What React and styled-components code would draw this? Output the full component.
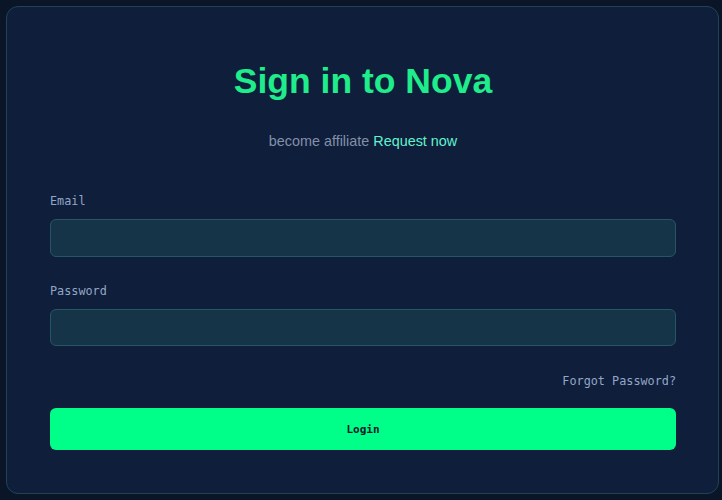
import React from "react";
import styled, { createGlobalStyle } from "styled-components";

const Global = createGlobalStyle`
  html, body { margin: 0; padding: 0; background: #0a1628; }
  body { font-family: "Liberation Sans", Arial, sans-serif; }
  * { box-sizing: border-box; }
`;

const Page = styled.div`
  padding: 6px 3px 6px 6px;
  height: 500px;
`;

const Card = styled.form`
  height: 488px;
  background: #0f1e3a;
  border: 1px solid #1e4454;
  border-radius: 12px;
  padding: 0 42px 43px 43px;
  display: flex;
  flex-direction: column;
`;

const Title = styled.h1`
  margin: 53px 0 0;
  font-family: "Liberation Sans", Arial, sans-serif;
  font-weight: 700;
  font-size: 35.5px;
  line-height: 43px;
  text-align: center;
  color: #1fec8b;
`;

const Subtitle = styled.p`
  margin: 29px 0 0;
  font-size: 14.4px;
  line-height: 18px;
  text-align: center;
  color: #8390aa;
`;

const Link = styled.a`
  color: #62f2cf;
  text-decoration: none;
  cursor: pointer;
`;

const Label = styled.label`
  display: block;
  margin-top: ${(p) => p.$top}px;
  font-family: "DejaVu Sans Mono", "Liberation Mono", monospace;
  font-size: 11.8px;
  line-height: 14px;
  color: #92a7c8;
`;

const Input = styled.input`
  display: block;
  width: 100%;
  height: 38px;
  margin-top: 11px;
  background: #163447;
  border: 1px solid #265565;
  border-radius: 6px;
  color: #d6e4f0;
  padding: 0 12px;
  outline: none;
`;

const ForgotRow = styled.div`
  margin-top: 28px;
  display: flex;
  justify-content: flex-end;
`;

const Forgot = styled.a`
  font-family: "DejaVu Sans Mono", "Liberation Mono", monospace;
  font-size: 11.8px;
  line-height: 14px;
  color: #92a7c8;
  cursor: pointer;
`;

const Button = styled.button`
  margin-top: 20px;
  width: 100%;
  height: 42px;
  border: none;
  border-radius: 6px;
  background: #00ff88;
  color: #0c1a2e;
  font-family: "DejaVu Sans Mono", "Liberation Mono", monospace;
  font-weight: 700;
  font-size: 11px;
  cursor: pointer;
`;

export default function App() {
  return (
    <>
      <Global />
      <Page>
        <Card onSubmit={(e) => e.preventDefault()}>
          <Title>Sign in to Nova</Title>
          <Subtitle>
            become affiliate <Link>Request now</Link>
          </Subtitle>
          <Label $top={44} htmlFor="email">Email</Label>
          <Input id="email" type="email" />
          <Label $top={27} htmlFor="password">Password</Label>
          <Input id="password" type="password" />
          <ForgotRow>
            <Forgot>Forgot Password?</Forgot>
          </ForgotRow>
          <Button type="submit">Login</Button>
        </Card>
      </Page>
    </>
  );
}
